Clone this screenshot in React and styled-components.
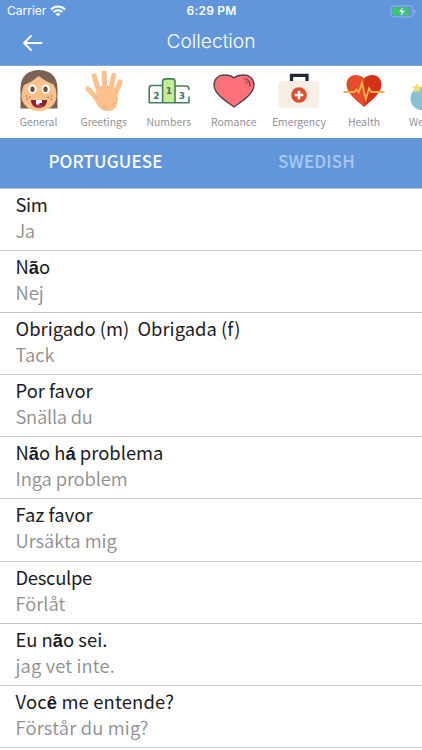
import React, { useState } from 'react'
import styled, { createGlobalStyle } from 'styled-components'

const GlobalStyle = createGlobalStyle`
  * { box-sizing: border-box; }
  body {
    margin: 0;
    background: white;
    overflow: hidden;
  }
`

// Page Wrapper
const StyledPage = styled.div`
  width: 422px;
  height: 750px;
  overflow: hidden;
  background: white;
  font-family: 'Noto Sans CJK KR', 'Noto Sans', sans-serif;
`

// Header Block
const StyledHeader = styled.header`
  height: 66px;
  background: #6296da;
  border-bottom: 1px solid #84a7dc;
  color: white;
  font-family: Inter, sans-serif;
`

const StyledStatusBar = styled.div`
  height: 22px;
  padding: 0 6px 0 7px;
  display: grid;
  grid-template-columns: 1fr auto 1fr;
  align-items: center;
  font-size: 12px;
  line-height: 22px;
`

const StyledCarrier = styled.div`
  display: flex;
  align-items: center;
  gap: 4px;
`

const StyledClock = styled.div`
  font-weight: 600;
  letter-spacing: 0.2px;
`

const StyledBattery = styled.div`
  display: flex;
  justify-content: flex-end;
`

const StyledNavBar = styled.div`
  height: 41px;
  padding: 0 22px;
  display: grid;
  grid-template-columns: 22px 1fr 22px;
  align-items: center;
`

const StyledBack = styled.button`
  width: 22px;
  height: 20px;
  padding: 0;
  display: flex;
  align-items: center;
  background: none;
  border: none;
  cursor: pointer;
`

const StyledTitle = styled.h1`
  margin: 0 0 2px;
  font-size: 19.2px;
  font-weight: 300;
  line-height: 39px;
  text-align: center;
`

// Category Strip
const StyledCategories = styled.nav`
  height: 72px;
  padding-left: 6px;
  display: flex;
  overflow: hidden;
`

const StyledCategory = styled.div`
  flex: 0 0 65.1px;
  padding-top: 4px;
  display: flex;
  flex-direction: column;
  align-items: center;
  color: #88888e;
  font-size: 10.5px;
  font-weight: 350;
  line-height: 16px;
  white-space: nowrap;
  cursor: pointer;

  svg {
    flex: none;
    margin-bottom: 2px;
  }
`

// Language Tabs
const StyledTabs = styled.div`
  height: 51px;
  display: flex;
  background: #6296da;
  border-bottom: 1px solid #a9c0e2;
`

const StyledTab = styled.div`
  flex: 1;
  color: ${props => props.$isActive ? 'white' : '#a9c8f3'};
  font-size: 17px;
  font-weight: 500;
  line-height: 46px;
  letter-spacing: 0.15px;
  text-align: center;
  cursor: pointer;
`

// Phrase Row
const StyledPhrase = styled.div`
  height: 62.1px;
  padding: 2px 15.5px 0;
  border-bottom: 1px solid #c8c8cc;
  white-space: pre;
`

const StyledSource = styled.div`
  height: 26px;
  color: #1c1c1e;
  font-size: 18.4px;
  line-height: 26px;
  letter-spacing: ${props => props.$spacing || 0}px;
`

const StyledTarget = styled.div`
  color: #8e8e91;
  font-size: 18.4px;
  font-weight: 350;
  line-height: 26px;
  letter-spacing: ${props => props.$spacing || 0}px;
`

const StyledAccent = styled.span`
  font-family: 'Liberation Sans', sans-serif;
  font-weight: bold;
  line-height: 1;
`

const WifiIcon = () => (
  <svg width="16" height="12" viewBox="0 0 16 12" fill="none" stroke="white" strokeWidth="2.1">
    <path d="M1 4.4C5 .5 11 .5 15 4.4" />
    <path d="M3.6 7.1C6.1 4.8 9.9 4.8 12.4 7.1" />
    <path d="M8 11.4L5.5 8.9C6.9 7.7 9.1 7.7 10.5 8.9Z" fill="white" stroke="none" />
  </svg>
)

const BatteryIcon = () => (
  <svg width="26" height="13" viewBox="0 0 26 13">
    <rect x="1" y=".9" width="22" height="11" rx="3" fill="none" stroke="#8fb4e6" />
    <rect x="2.7" y="2.5" width="16" height="7.8" rx="1.5" fill="#37cb62" />
    <path d="M24.3 4.7C25.8 5.2 25.8 7.6 24.3 8.1Z" fill="#a6c4eb" />
    <path d="M13.6 1.5L8.4 7H11.5L10.3 11.4L15.4 5.7H12.3Z" fill="white" stroke="#6296da" strokeWidth=".6" />
  </svg>
)

const BackIcon = () => (
  <svg width="22" height="20" viewBox="0 0 22 20" fill="none" stroke="white" strokeWidth="1.8" strokeLinecap="round" strokeLinejoin="round">
    <path d="M19.6 10H2M9 3L2 10L9 17" />
  </svg>
)

const GeneralIcon = () => (
  <svg width="42" height="42" viewBox="0 0 42 42">
    <path d="M2.5 38.5V18C2.5 6 10.5 0 21 0S39.5 6 39.5 18V38.5H27V35H15V38.5Z" fill="#7c6254" />
    <path d="M3.6 24C4.5 20 4.5 17 7 14.5Q14 12 20.5 6Q29 12 35.5 14.5Q38 18 38.4 24C39.5 34 31 41 21 41S2.5 34 3.6 24Z" fill="#fbc18b" />
    <ellipse cx="14.3" cy="19" rx="4.2" ry="4.7" fill="white" />
    <ellipse cx="27.7" cy="19" rx="4.2" ry="4.7" fill="white" />
    <ellipse cx="14.5" cy="19.3" rx="2.1" ry="2.8" fill="#654d43" />
    <ellipse cx="27.5" cy="19.3" rx="2.1" ry="2.8" fill="#654d43" />
    <path d="M17.5 24Q21 22.5 24.5 24" fill="none" stroke="#f4b283" strokeWidth="1" />
    <g fill="#9e6b4b">
      <circle cx="8.4" cy="26" r=".8" />
      <circle cx="11.8" cy="27.2" r=".8" />
      <circle cx="8.9" cy="29.1" r=".8" />
      <circle cx="33.6" cy="26" r=".8" />
      <circle cx="30.2" cy="27.2" r=".8" />
      <circle cx="33.1" cy="29.1" r=".8" />
    </g>
    <path d="M13 30H29C29 35 25.5 38 21 38S13 35 13 30Z" fill="#85203a" />
    <path d="M18 30H24V33H21.4V34.5H18Z" fill="white" />
    <path d="M16.5 36Q21 33.8 25.5 36Q21 39.5 16.5 36Z" fill="#b93a4c" />
  </svg>
)

const GreetingsIcon = () => (
  <svg width="42" height="42" viewBox="0 0 42 42">
    <g fill="none" stroke="#fcc18c" strokeWidth="5" strokeLinecap="round">
      <path d="M11.2 5.8L16.5 24" />
      <path d="M21.2 2.9L22 22" />
      <path d="M30.7 5.3L27 23" />
      <path d="M37 11.8L31.5 26" />
      <path d="M4.8 18.8L16 30" />
    </g>
    <path d="M14 17.5Q22 14.5 31.5 17.5Q37 28 34 33Q33.5 41 25 41Q18 41 15 36L9 26L13.5 24Z" fill="#fcc18c" />
    <path d="M12.5 25.5L16 28.8M17.8 16L18.5 19M24.5 16L24.3 18.5M28.5 35.5Q30.5 32.5 34 33M18.5 37Q21 38.8 23.5 38.5" fill="none" stroke="#f0a878" strokeWidth=".9" strokeLinecap="round" />
  </svg>
)

const StyledNumeral = styled.text`
  font-family: 'DejaVu Sans', sans-serif;
  font-weight: bold;
  font-size: 9px;
  fill: #3f7656;
  text-anchor: middle;
`

const NumbersIcon = () => (
  <svg width="42" height="42" viewBox="0 0 42 42">
    <g fill="none" stroke="#45805c" strokeWidth="1.6" strokeLinejoin="round">
      <path d="M14 32.7H1.2V17.9Q1.2 15.5 3.6 15.5H14" />
      <path d="M27 32.7H41V26.5M27 16H38Q41 16 41 20" />
      <path d="M14.6 32.7V11.6Q14.6 8.9 17.3 8.9H24.3Q27 8.9 27 11.6V32.7Z" fill="#c6ec94" />
    </g>
    <StyledNumeral x="8.4" y="28.5">2</StyledNumeral>
    <StyledNumeral x="21" y="23.5">1</StyledNumeral>
    <StyledNumeral x="34" y="28.5">3</StyledNumeral>
  </svg>
)

const RomanceIcon = () => (
  <svg width="42" height="42" viewBox="0 0 42 42" strokeLinecap="round">
    <path d="M21 37C14 32 1 24 1 15C1 8.8 5.5 5 11 5C15.5 5 19 6 21 8C23 6 26.5 5 31 5C36.5 5 41 8.8 41 15C41 24 28 32 21 37Z" fill="#ff7179" stroke="#4e4248" strokeWidth="1.3" />
    <path d="M33.2 9Q36.8 11 37 15.8M31.2 8.8H31.4" fill="none" stroke="#663c45" strokeWidth="1.3" />
    <path d="M32.2 11.2Q33.8 12 34.3 13.6" fill="none" stroke="#663c45" strokeWidth="1" />
  </svg>
)

const EmergencyIcon = () => (
  <svg width="42" height="42" viewBox="0 0 42 42">
    <path d="M13.5 11.5V5.3H29V11.5" fill="none" stroke="#202a31" strokeWidth="3.3" />
    <rect x=".5" y="11" width="41" height="27" rx="4" fill="#f7efe6" />
    <circle cx="21" cy="25" r="7.8" fill="#e04c30" />
    <path d="M21 20.7V29.3M16.7 25H25.3" stroke="white" strokeWidth="2.6" />
  </svg>
)

const HealthIcon = () => (
  <svg width="42" height="42" viewBox="0 0 42 42">
    <path d="M21 37C15 31.5 3.5 24 3.5 14.5C3.5 9 7.5 5 12.3 5C16 5 19.2 6.5 21 8.5Z" fill="#e64b2b" />
    <path d="M21 37C27 31.5 38.5 24 38.5 14.5C38.5 9 34.5 5 29.7 5C26 5 22.8 6.5 21 8.5Z" fill="#d23217" />
    <path d="M.5 22H11.5L13.5 19.5L15.7 22.5L19 13L22.8 29L26 18.5L28.3 22H41.5" fill="none" stroke="#f4ae4a" strokeWidth="1.9" />
  </svg>
)

const WeatherIcon = () => (
  <svg width="42" height="42" viewBox="0 0 42 42">
    <path d="M14 17A11.5 11.5 0 1 0 14 40H32V17Z" fill="#8ac1d1" />
    <path d="M9 13L10.5 16.2L14 16.7L11.5 19.2L12 22.6L9 21L6 22.6L6.5 19.2L4 16.7L7.5 16.2Z" fill="#f5dc65" />
  </svg>
)

const categories = [
  { name: 'General', Icon: GeneralIcon },
  { name: 'Greetings', Icon: GreetingsIcon },
  { name: 'Numbers', Icon: NumbersIcon },
  { name: 'Romance', Icon: RomanceIcon },
  { name: 'Emergency', Icon: EmergencyIcon },
  { name: 'Health', Icon: HealthIcon },
  { name: 'Weather', Icon: WeatherIcon },
]

// letters wrapped in * are set in the heavier accent face
const phrases = [
  { source: 'Sim', sourceSpacing: -0.4, target: 'Ja', targetSpacing: -0.4 },
  { source: 'N*ã*o', target: 'Nej' },
  { source: 'Obrigado (m)  Obrigada (f)', target: 'Tack' },
  { source: 'Por favor', target: 'Snälla du', targetSpacing: -0.25 },
  { source: 'N*ã*o h*á* problema', target: 'Inga problem', targetSpacing: -0.1 },
  { source: 'Faz favor', sourceSpacing: 0.1, target: 'Ursäkta mig' },
  { source: 'Desculpe', sourceSpacing: -0.3, target: 'Förlåt' },
  { source: 'Eu n*ã*o sei.', target: 'jag vet inte.', targetSpacing: 0.15 },
  { source: 'Voc*ê* me entende?', sourceSpacing: 0.15, target: 'Förstår du mig?', targetSpacing: 0.2 },
]

const Phrase = ({ info }) => (
  <StyledPhrase>
    <StyledSource $spacing={info.sourceSpacing}>
      {info.source.split('*').map((part, i) => (
        i % 2 ? <StyledAccent key={i}>{part}</StyledAccent> : part
      ))}
    </StyledSource>
    <StyledTarget $spacing={info.targetSpacing}>{info.target}</StyledTarget>
  </StyledPhrase>
)

const App = () => {

  const [tab, setTab] = useState('source')

  return (
    <StyledPage>
      <GlobalStyle />

      {/* Header */}
      <StyledHeader>
        <StyledStatusBar>
          <StyledCarrier>Carrier <WifiIcon /></StyledCarrier>
          <StyledClock>6:29 PM</StyledClock>
          <StyledBattery><BatteryIcon /></StyledBattery>
        </StyledStatusBar>
        <StyledNavBar>
          <StyledBack aria-label="Back"><BackIcon /></StyledBack>
          <StyledTitle>Collection</StyledTitle>
        </StyledNavBar>
      </StyledHeader>

      {/* Categories */}
      <StyledCategories>
        {categories.map(({ name, Icon }) => (
          <StyledCategory key={name}>
            <Icon />
            {name}
          </StyledCategory>
        ))}
      </StyledCategories>

      {/* Tabs */}
      <StyledTabs>
        <StyledTab $isActive={tab === 'source'} onClick={() => setTab('source')}>PORTUGUESE</StyledTab>
        <StyledTab $isActive={tab === 'target'} onClick={() => setTab('target')}>SWEDISH</StyledTab>
      </StyledTabs>

      {/* Phrases */}
      {phrases.map(info => <Phrase key={info.source} info={info} />)}
    </StyledPage>
  )
}

export default App
